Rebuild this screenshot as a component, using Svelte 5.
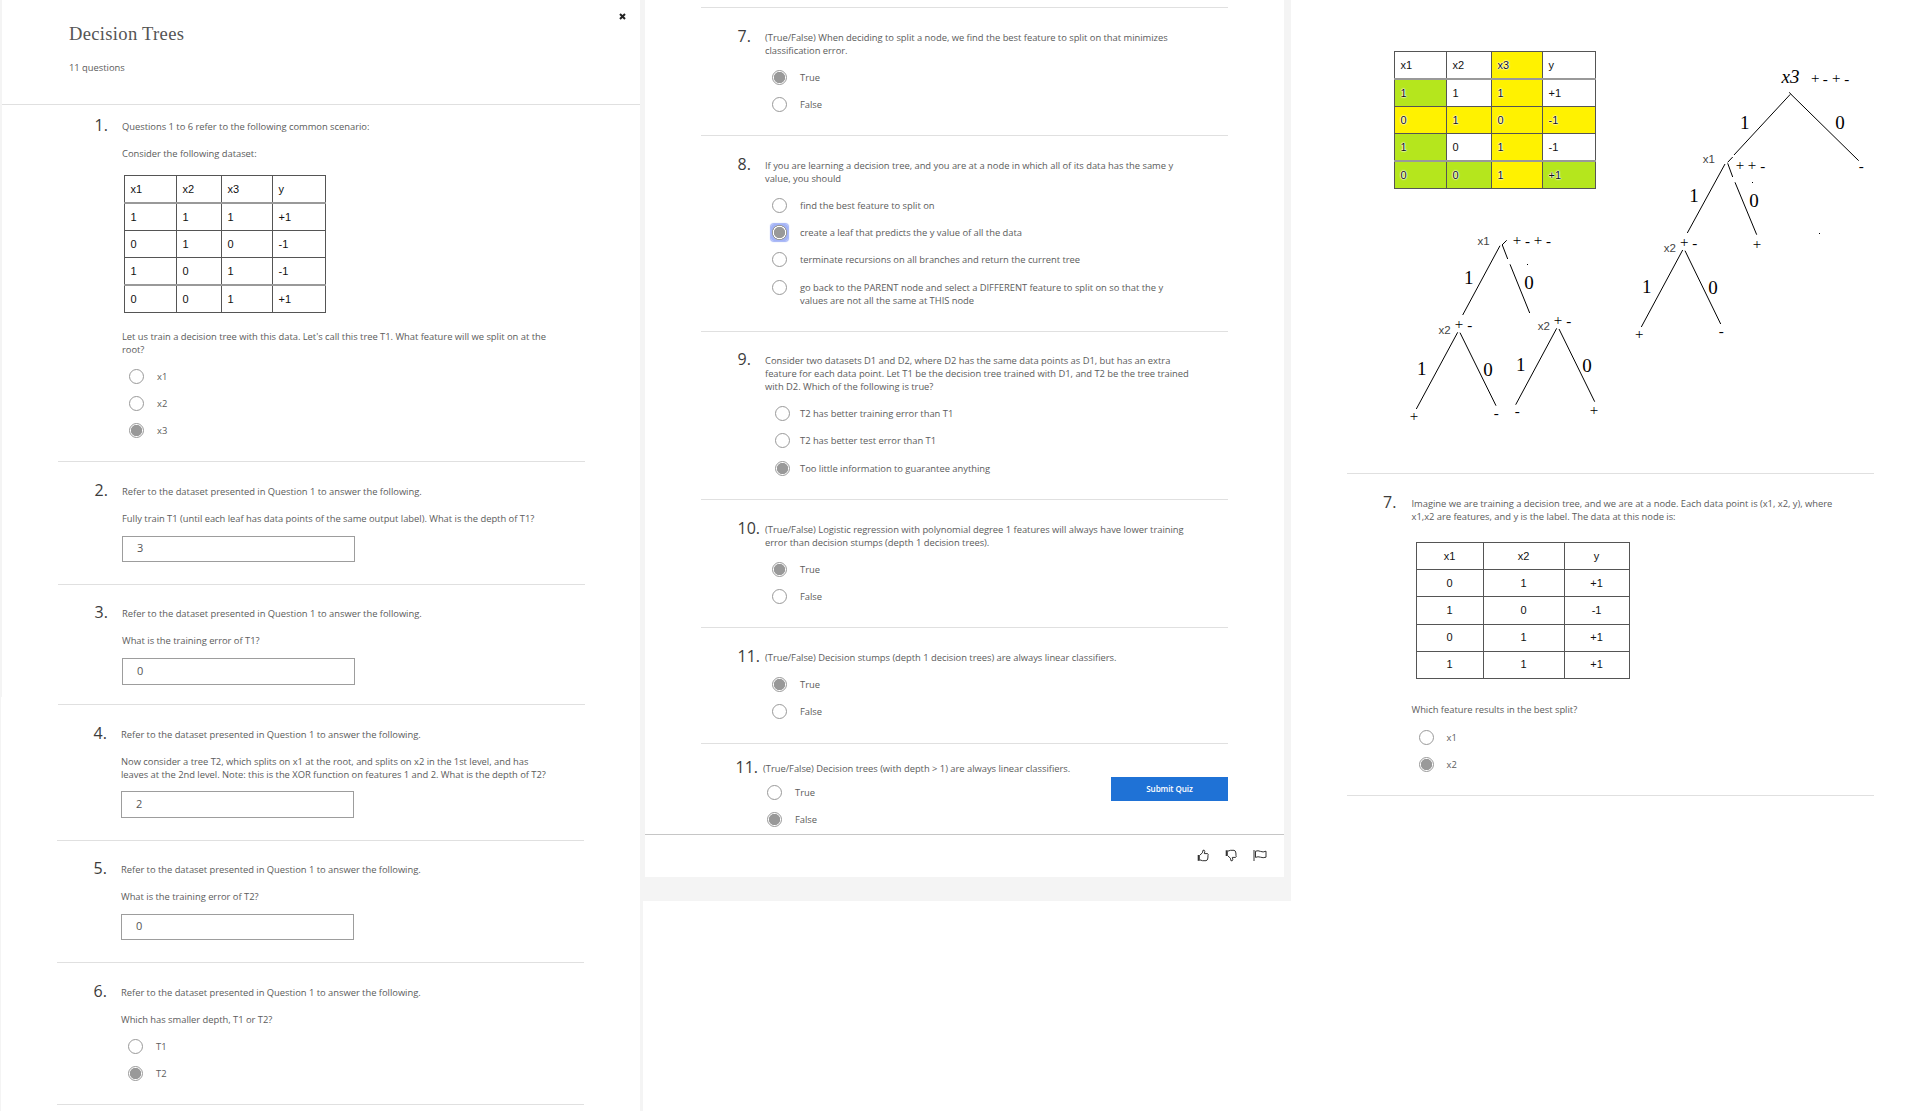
<script>
  const refer = 'Refer to the dataset presented in Question 1 to answer the following.';

  const dataset = {
    kind: 'wide',
    rows: [
      ['x1', 'x2', 'x3', 'y'],
      ['1', '1', '1', '+1'],
      ['0', '1', '0', '-1'],
      ['1', '0', '1', '-1'],
      ['0', '0', '1', '+1']
    ]
  };

  // y = yellow, g = green, . = plain
  const marks = ['..y.', 'g.y.', 'yyyy', 'g.y.', 'ggyg'];

  const nodeData = {
    kind: 'centered',
    rows: [
      ['x1', 'x2', 'y'],
      ['0', '1', '+1'],
      ['1', '0', '-1'],
      ['0', '1', '+1'],
      ['1', '1', '+1']
    ]
  };

  const left = [
    {
      n: '1.', cls: 'first',
      text: [['Questions 1 to 6 refer to the following common scenario:'], ['Consider the following dataset:']],
      table: dataset,
      after: [["Let us train a decision tree with this data. Let's call this tree T1. What feature will we split on at the", 'root?']],
      options: [['x1'], ['x2'], ['x3']], picked: 2
    },
    { n: '2.', text: [[refer], ['Fully train T1 (until each leaf has data points of the same output label). What is the depth of T1?']], value: '3' },
    { n: '3.', cls: 'raised tall short', text: [[refer], ['What is the training error of T1?']], value: '0' },
    {
      n: '4.', cls: 'nudged tall near',
      text: [[refer], ['Now consider a tree T2, which splits on x1 at the root, and splits on x2 in the 1st level, and has', 'leaves at the 2nd level. Note: this is the XOR function on features 1 and 2. What is the depth of T2?']],
      value: '2'
    },
    { n: '5.', cls: 'nudged raised', text: [[refer], ['What is the training error of T2?']], value: '0' },
    { n: '6.', cls: 'nudged', text: [[refer], ['Which has smaller depth, T1 or T2?']], options: [['T1'], ['T2']], picked: 1 }
  ];

  const middle = [
    { n: '7.', text: [['(True/False) When deciding to split a node, we find the best feature to split on that minimizes', 'classification error.']], options: [['True'], ['False']], picked: 0 },
    {
      n: '8.', cls: 'focused',
      text: [['If you are learning a decision tree, and you are at a node in which all of its data has the same y', 'value, you should']],
      options: [
        ['find the best feature to split on'],
        ['create a leaf that predicts the y value of all the data'],
        ['terminate recursions on all branches and return the current tree'],
        ['go back to the PARENT node and select a DIFFERENT feature to split on so that the y', 'values are not all the same at THIS node']
      ],
      picked: 1
    },
    {
      n: '9.', cls: 'raised inset',
      text: [['Consider two datasets D1 and D2, where D2 has the same data points as D1, but has an extra', 'feature for each data point. Let T1 be the decision tree trained with D1, and T2 be the tree trained', 'with D2. Which of the following is true?']],
      options: [['T2 has better training error than T1'], ['T2 has better test error than T1'], ['Too little information to guarantee anything']],
      picked: 2
    },
    { n: '10.', text: [['(True/False) Logistic regression with polynomial degree 1 features will always have lower training', 'error than decision stumps (depth 1 decision trees).']], options: [['True'], ['False']], picked: 0 },
    { n: '11.', cls: 'roomy', text: [['(True/False) Decision stumps (depth 1 decision trees) are always linear classifiers.']], options: [['True'], ['False']], picked: 0 },
    { n: '11.', cls: 'last', text: [['(True/False) Decision trees (with depth > 1) are always linear classifiers.']], options: [['True'], ['False']], picked: 1 }
  ];

  const right = [
    {
      n: '7.', cls: 'node',
      text: [['Imagine we are training a decision tree, and we are at a node. Each data point is (x1, x2, y), where', 'x1,x2 are features, and y is the label. The data at this node is:']],
      table: nodeData,
      after: [['Which feature results in the best split?']],
      options: [['x1'], ['x2']], picked: 1
    }
  ];

  // Tree sketch, in page pixels.
  const edges = [
    [1500, 245.7, 1462.7, 315], [1506.7, 240.3, 1502, 245], [1502.3, 245, 1507.7, 259], [1510, 264.3, 1529.7, 313],
    [1457.7, 332.3, 1416.3, 409], [1460, 332.7, 1496, 405.7],
    [1556.7, 328.3, 1515.7, 404.7], [1559, 329, 1594.7, 401.7],
    [1789.3, 92.3, 1791, 94.3], [1790.3, 94.3, 1734, 155], [1732.7, 157, 1727.7, 162.3], [1791, 94.3, 1858.7, 160.7],
    [1725, 164, 1687.3, 233], [1727.7, 163.3, 1732.7, 177], [1735, 182.3, 1756.7, 234.7],
    [1682.7, 250, 1641.3, 327], [1685, 250.7, 1720.7, 324]
  ];
  const dots = [[1527, 264], [1752, 182], [1819, 233]];
  const branches = [
    ['1', 1468.8, 284], ['0', 1529, 288.5], ['1', 1421.8, 375.3], ['0', 1488, 375.7], ['1', 1520.8, 371], ['0', 1587, 371.7],
    ['1', 1744.8, 128.7], ['0', 1840, 129], ['1', 1694, 202], ['0', 1754, 206.7], ['1', 1646.8, 293], ['0', 1713, 293.7]
  ];
  const names = [
    ['x1', 1477.5, 245.3], ['x2', 1438.5, 334], ['x2', 1537.7, 330], ['x1', 1702.7, 163], ['x2', 1663.7, 252]
  ];
  const plus = [
    [1517, 240.7], [1538, 240.7], [1459, 324.7], [1414, 416.7], [1558, 320.7], [1594, 410.7],
    [1815.3, 79], [1836.3, 79], [1740, 166], [1752, 166], [1757, 244.7], [1684.3, 242.7], [1639.3, 334.7]
  ];
  const minus = [
    [1527.5, 242.3], [1548.6, 242.3], [1469.7, 326.3], [1496.3, 414.3], [1568.7, 322.3], [1517.3, 412],
    [1825.3, 80.7], [1846.7, 80.7], [1861.3, 167.3], [1762.7, 167.3], [1694.7, 244.3], [1721.3, 332.3]
  ];
  const markClass = { y: 'yellow', g: 'green' };
</script>

{#snippet lines(list)}
  {#each list as line, i}{#if i}<br />{/if}{line}{/each}
{/snippet}

{#snippet grid(table, colors)}
  <table class={table.kind}>
    <tbody>
      {#each table.rows as row, r}
        <tr>
          {#each row as cell, c}
            <td class={colors ? markClass[colors[r][c]] : undefined}><span>{cell}</span></td>
          {/each}
        </tr>
      {/each}
    </tbody>
  </table>
{/snippet}

{#snippet question(q)}
  <section class="question {q.cls ?? ''}">
    <div class="number">{q.n}</div>
    <div class="body">
      {#each q.text as p}<p>{@render lines(p)}</p>{/each}
      {#if q.table}{@render grid(q.table, null)}{/if}
      {#each q.after ?? [] as p}<p>{@render lines(p)}</p>{/each}
      {#if q.value}<div class="answer">{q.value}</div>{/if}
      {#each q.options ?? [] as option, i}
        <div class="option">
          <span class="radio" class:on={i === q.picked}></span>
          <span class="label">{@render lines(option)}</span>
        </div>
      {/each}
    </div>
  </section>
{/snippet}

<main>
  <div class="col left">
    <header>
      <div>
        <h1>Decision Trees</h1>
        <div class="count">11 questions</div>
      </div>
      <svg class="close" width="7" height="7" viewBox="0 0 7 7"><path d="M1 1L6 6M6 1L1 6" /></svg>
    </header>
    <div class="list">
      {#each left as q}{@render question(q)}{/each}
    </div>
  </div>

  <div class="col middle">
    <div class="panel">
      <div class="list">
        {#each middle as q}{@render question(q)}{/each}
        <button>Submit Quiz</button>
      </div>
      <footer>
        <svg width="12" height="13" viewBox="0 0 12 13">
          <path d="M3 6L5.4 3.8L6 1.2Q7.8.8 7.8 2.6L7.3 4.6H10.6Q11.6 5 11 6.2L10.9 9Q10.6 11.6 9 11.7H5.5L3 10.9" />
          <path class="cuff" d="M.7 6H2.8V11.8H.7Z" />
        </svg>
        <svg width="12" height="13" viewBox="0 0 12 13">
          <path d="M3 7L5.4 9.2L6 11.8Q7.8 12.2 7.8 10.4L7.3 8.4H10.6Q11.6 8 11 6.8L10.9 4Q10.6 1.4 9 1.3H5.5L3 2.1" />
          <path class="cuff" d="M.7 1.3H2.8V7H.7Z" />
        </svg>
        <svg width="14" height="13" viewBox="0 0 14 13">
          <path d="M1 1V12M2.5 2.2Q5 1.2 7.5 2.4T13 2.2V8.2Q10 9.2 7.5 8.2T2.5 8.4Z" />
        </svg>
      </footer>
    </div>
  </div>

  <div class="col right">
    <div class="sketch">
      {@render grid(dataset, marks)}
      <svg class="trees" width="629" height="473" viewBox="1291 0 629 473">
        {#each edges as [x1, y1, x2, y2]}<line {x1} {y1} {x2} {y2} />{/each}
        {#each dots as [x, y]}<rect {x} {y} width="1" height="1" />{/each}
        {#each branches as [t, x, y]}<text class="branch" {x} {y}>{t}</text>{/each}
        {#each names as [t, x, y]}<text class="name" {x} {y}>{t}</text>{/each}
        {#each plus as [x, y]}<text class="sign" {x} y={y + 4.2}>+</text>{/each}
        {#each minus as [x, y]}<text class="sign" {x} y={y + 3.6}>-</text>{/each}
        <text class="root" x="1781.5" y="82.7">x3</text>
      </svg>
    </div>
    <div class="list">
      {#each right as q}{@render question(q)}{/each}
    </div>
  </div>
</main>

<style>
  :global(body) { background: #fff; overflow: hidden; }
  main {
    display: flex;
    width: 1920px;
    height: 1111px;
    overflow: hidden;
    font: 9.4px/13px 'Open Sans', 'Noto Sans', sans-serif;
    letter-spacing: -0.022px;
    color: #5c5c5c;
    background: #fff;
  }
  .col { box-sizing: border-box; flex: none; }
  .left {
    width: 643px;
    background:
      linear-gradient(#f4f4f4, #f4f4f4) 0 0 / 2px 697px no-repeat,
      linear-gradient(#f4f4f4, #f4f4f4) 0 0 / 1px 100% no-repeat,
      linear-gradient(#f4f4f4, #f4f4f4) 100% 0 / 3px 100% no-repeat;
  }
  .middle { width: 648px; height: 901px; background: #f4f4f4; padding: 0 7px 0 2px; }
  .panel { height: 877px; background: #fff; display: flex; flex-direction: column; }
  .right { width: 629px; }

  header {
    display: flex;
    justify-content: space-between;
    box-sizing: border-box;
    height: 105px;
    margin: 0 3px 0 2px;
    padding: 13px 14px 0 67px;
    border-bottom: 1px solid #e0e0e0;
  }
  h1 {
    margin: 0;
    font: 400 18.6px/42px 'Liberation Serif', serif;
    color: #555;
    letter-spacing: 0.3px;
  }
  .count { margin-top: 6px; }
  .close { flex: none; }
  .close path { stroke: #222; stroke-width: 2; fill: none; }

  .left .list { width: 527px; margin-left: 58px; }
  .middle .list { width: 527px; height: 827px; margin: 0 0 0 56px; padding-top: 7px; position: relative; }
  .right .list { width: 527px; margin-left: 56px; }
  .middle .list::before, .right .list::before { content: ''; display: block; height: 1px; background: #e0e0e0; }

  .question {
    display: grid;
    grid-template-columns: 27px 1fr;
    padding: 23px 0 24px 37px;
    border-bottom: 1px solid #e0e0e0;
    white-space: nowrap;
  }
  .question:has(.answer) { padding-bottom: 22px; }
  .first { padding-top: 15px; }
  .raised { padding-top: 22px; }
  .question.short { padding-bottom: 19px; }
  .nudged { margin-left: -1px; margin-right: 1px; }
  .roomy { padding-bottom: 25px; }
  .question.last { padding: 18px 0 0 35px; border: 0; }
  .node { grid-template-columns: 28px 1fr; padding-left: 36.5px; }

  .number { font-size: 16px; line-height: 13px; margin: -1px 0 0 -0.5px; color: #3c3c3c; }
  p { margin: 0; }
  p + p { margin-top: 14px; }

  .answer {
    box-sizing: border-box;
    width: 233px;
    height: 26px;
    margin-top: 11px;
    padding-left: 14px;
    border: 1px solid #9d9d9d;
    font-size: 11px;
    line-height: 22px;
    color: #555;
  }
  .tall .answer { height: 27px; line-height: 24px; }
  .near .answer { margin-top: 10px; }

  .option { display: flex; align-items: flex-start; margin-top: 14px; padding-left: 7px; }
  .radio {
    box-sizing: border-box;
    flex: none;
    width: 15px;
    height: 15px;
    margin: -1px 13px -1px 0;
    border: 1px solid #999;
    border-radius: 50%;
    background: #fff;
  }
  .radio.on { background: radial-gradient(circle, #999 5.3px, #fff 6px); }
  .focused .option:last-child { margin-top: 15px; }
  .focused .radio.on {
    position: relative;
    isolation: isolate;
  }
  .focused .radio.on::before {
    content: '';
    position: absolute;
    z-index: -1;
    inset: -2px;
    border-radius: 3px;
    background: radial-gradient(circle, #999 5.3px, #fff 6px, #fff 6.4px, #999 6.8px, #999 7.2px, #a3b3f6 7.9px);
    box-shadow: 0 0 1px 1px #a3b3f6;
  }
  .inset .option { padding-left: 10px; }
  .inset .radio { margin-right: 10px; }
  .inset .option:last-child { margin-top: 15px; }
  .last .option { padding-left: 4px; }
  .last .option:nth-of-type(1) { margin-top: 11px; }
  .node .option:nth-of-type(1) { margin-top: 15px; }

  table {
    border-collapse: collapse;
    table-layout: fixed;
    font: 11px/13px 'Liberation Sans', Arial, sans-serif;
    color: #111;
  }
  td { border: 1px solid #555; padding: 0 0 0 5.5px; height: 26px; }
  .wide { width: 202px; height: 138px; }
  .wide td:nth-child(1) { width: 45.5px; }
  .wide td:nth-child(2) { width: 38.5px; }
  .wide td:nth-child(3) { width: 44.5px; }
  .wide tr:nth-child(1) td, .wide tr:nth-child(4) td { border-bottom: 2px solid #999; }
  .first table { margin: 15px 0 17px 2px; }
  .centered { width: 214px; height: 137px; margin: 19px 0 24px 4px; }
  .centered td { padding: 0; height: 26.2px; text-align: center; }
  .centered td:nth-child(1) { width: 66px; }
  .centered td:nth-child(2) { width: 80px; }

  .sketch { position: relative; box-sizing: border-box; height: 473px; padding: 51px 0 0 103px; }
  .yellow { background: #fff200; }
  .green { background: #b5e61d; }
  .yellow span, .green span { text-shadow: 0 0 1px #fff, 0 0 1px #fff, 0 0 2px #fff, 0 0 2px #fff; }
  .trees { position: absolute; left: 0; top: 0; }
  .trees line { stroke: #000; stroke-width: 1; }
  .branch { font: 19px 'Liberation Serif', serif; text-anchor: middle; }
  .name { font: 11.5px 'Liberation Sans', Arial, sans-serif; fill: #444; }
  .sign { font: 15px 'Liberation Serif', serif; text-anchor: middle; }
  .root { font: italic 19px 'Liberation Serif', serif; }

  button {
    position: absolute;
    right: 0;
    top: 777px;
    width: 117px;
    height: 24px;
    padding: 0;
    border: 0;
    background: #1f72d6;
    color: #fff;
    font: 600 8.1px/22px 'Open Sans', sans-serif;
    letter-spacing: -0.1px;
  }
  footer {
    flex: 1;
    display: flex;
    justify-content: flex-end;
    align-items: flex-start;
    gap: 16px;
    padding: 14px 17px 0 0;
    border-top: 1px solid #c6c6c6;
  }
  footer path { fill: none; stroke: #333; stroke-width: 1; }
  footer .cuff { fill: #333; stroke: none; }
</style>
